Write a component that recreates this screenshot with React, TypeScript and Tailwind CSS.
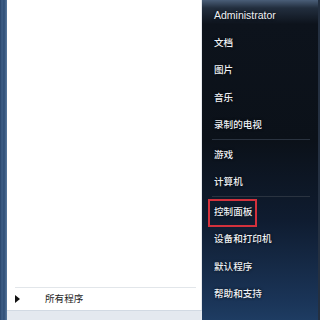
import React from "react";

const Row = ({ label, latin = false, boxed = false }: { label: string; latin?: boolean; boxed?: boolean }) => (
  <div className="relative h-[27.5px] flex items-center pl-[12px]">
    {boxed && (
      <div className="absolute left-[6px] top-[1.5px] w-[49px] h-[28px] border-2 border-[#d3313c]" />
    )}
    <span
      className={
        (latin ? "text-[10.5px] " : "text-[9.6px] font-medium ") +
        "text-[#eef1f5] leading-none [text-shadow:0_0_3px_rgba(0,0,0,0.9)]"
      }
      style={{ fontFamily: latin ? '"Liberation Sans", Arial, sans-serif' : '"Noto Sans CJK SC", "Liberation Sans", sans-serif' }}
    >
      {label}
    </span>
  </div>
);

const Sep = () => <div className="h-[2px] flex items-center pl-[10px] pr-[8px]"><div className="h-px w-full bg-[#2a3340]" /></div>;

export default function App() {
  return (
    <div className="w-[320px] h-[320px] flex overflow-hidden bg-white">
      <div className="w-[7px] h-full bg-[linear-gradient(90deg,#27446a_0px,#3f5f86_2px,#2f4e76_4px,#4a6a90_6px,#5b7a9e_7px)]" />
      <div className="w-[195px] h-full flex flex-col">
        <div className="flex-1 bg-white border-r border-[#e6e9ee]" />
        <div className="h-[23px] bg-white border-r border-[#e6e9ee] flex flex-col">
          <div className="ml-[8px] mr-[5px] h-px bg-[#e2e6ea]" />
          <div className="flex-1 flex items-center">
            <svg width="5" height="8" viewBox="0 0 5 8" className="ml-[8px]">
              <path d="M0 0 L5 4 L0 8 Z" fill="#111" />
            </svg>
            <span
              className="ml-[25px] text-[9.6px] text-[#1c1c1c] leading-none"
              style={{ fontFamily: '"Noto Sans CJK SC", "Liberation Sans", sans-serif' }}
            >
              所有程序
            </span>
          </div>
        </div>
        <div className="h-[10px] bg-[#e4e9ef] border-t border-[#d2dae3]" />
      </div>
      <div className="w-[118px] h-full border-r-2 border-[#243041] bg-[linear-gradient(180deg,#4a5e78_0px,#222e3e_8px,#0d131c_24px,#0b1119_140px,#0f1c30_220px,#1a3457_300px,#1e3c62_320px)] pt-[1.25px]">
        <Row label="Administrator" latin />
        <Row label="文档" />
        <Row label="图片" />
        <Row label="音乐" />
        <Row label="录制的电视" />
        <Sep />
        <Row label="游戏" />
        <Row label="计算机" />
        <Sep />
        <Row label="控制面板" boxed />
        <Row label="设备和打印机" />
        <Row label="默认程序" />
        <Row label="帮助和支持" />
      </div>
    </div>
  );
}
